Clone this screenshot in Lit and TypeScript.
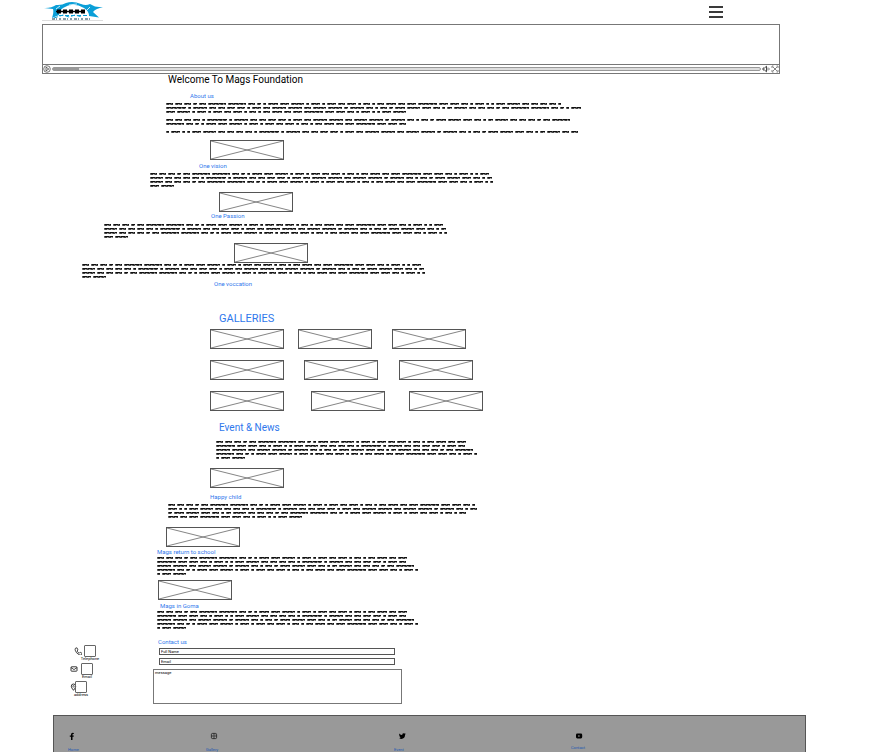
import { LitElement, html, css, svg } from "lit";
import { customElement, property } from "lit/decorators.js";

// Widths of the words in the greeked filler copy; the sequence repeats.
const WORDS = [
  7, 7, 7, 4, 7, 18, 18, 7, 4, 3, 10, 9, 13, 3, 9, 3, 9, 7, 9, 3, 7, 3, 7, 10,
  7, 9, 19, 9, 9, 7, 3, 9, 3, 3, 9, 13, 7, 7, 7, 7, 3, 20, 3, 14, 7, 7, 8, 8,
  3, 9, 7, 14, 14, 7, 13, 14, 4, 14, 7, 3, 7, 4, 10, 13, 9, 7, 3, 5, 13,
];

@customElement("greek-text")
class GreekText extends LitElement {
  @property({ type: Number }) start = 0;
  @property({ type: Number }) count = 105;

  static styles = css`
    :host {
      display: flex;
      flex-wrap: wrap;
      column-gap: 2px;
    }
    .word {
      height: 2px;
      margin: 1px 0;
      background:
        repeating-linear-gradient(90deg, #555 0 1px, #111 1px 5px) 0 0 / 100% 1px no-repeat,
        repeating-linear-gradient(90deg, #777 0 1px, #444 1px 3px, #aaa 3px 4px) 0 1px / 100% 1px no-repeat;
    }
  `;

  render() {
    return Array.from({ length: this.count }, (_, i) => {
      const w = WORDS[(this.start + i) % WORDS.length];
      return html`<span class="word" style="width:${w}px"></span>`;
    });
  }
}

@customElement("image-box")
class ImageBox extends LitElement {
  static styles = css`
    :host {
      display: block;
      width: 74px;
      height: 20px;
    }
    .frame {
      display: block;
      width: 100%;
      height: 100%;
    }
  `;
  render() {
    return html`<svg class="frame" viewBox="0 0 74 20" role="img" aria-label="Image placeholder">
      <path d="M1 1L73 19M1 19L73 1" stroke="#666" stroke-width=".8" fill="none" />
      <rect x=".5" y=".5" width="73" height="19" fill="none" stroke="#555" />
    </svg>`;
  }
}

const icons = {
  phone: svg`<path d="M1.500 1.200L3 .8 4 3 3 4Q3.700 5.600 5.200 6.200L6.200 5.200 8 6.300 7.600 7.800Q6.500 8.400 5 7.700 2 6.200 1.100 3 1 2 1.500 1.200Z" fill="none" stroke="#222" stroke-width=".8"/>`,
  mail: svg`<rect x="1" y="1.800" width="6" height="4.400" rx=".6" fill="none" stroke="#222" stroke-width=".9"/><path d="M1 2.500L4 4.600 7 2.500" fill="none" stroke="#222" stroke-width=".8"/>`,
  pin: svg`<path d="M3.500 7.300Q1.300 4.800 1.300 3.200A2.200 2.200 0 0 1 5.700 3.200Q5.700 4.800 3.500 7.300Z" fill="none" stroke="#222" stroke-width=".9"/><circle cx="3.500" cy="3.300" r=".8" fill="none" stroke="#222" stroke-width=".6"/>`,
  facebook: svg`<path d="M3 8V4.700H1.800V3.400H3V2.400Q3 .8 4.700 .8L5.800 .9V2.100H5.100Q4.500 2.100 4.500 2.700V3.400H5.800L5.600 4.700H4.500V8Z" fill="#000"/>`,
  instagram: svg`<rect x="1.400" y="1.400" width="5.200" height="5.200" rx="1.200" fill="none" stroke="#222" stroke-width=".9"/><circle cx="4" cy="4" r="1.200" fill="none" stroke="#222" stroke-width=".8"/><circle cx="5.600" cy="2.500" r=".3" fill="#222"/>`,
  twitter: svg`<path d="M1.300 1.500Q2.600 3 4.200 3.100 4 1.300 5.600 1.200 6.200 1.200 6.600 1.600L7.600 1.300 7 2.200 7.700 2.100 7.100 2.800Q7 6.700 3.300 7 1.900 7 1 6.300 2.100 6.300 2.800 5.800 1.800 5.600 1.600 4.800L2.100 4.700Q1.200 4.300 1.100 3.300L1.700 3.400Q.8 2.600 1.300 1.500Z" fill="#000"/>`,
  youtube: svg`<rect x="1" y="1.600" width="6.200" height="4.800" rx="1.300" fill="#000"/><path d="M3.400 3V5L5.200 4Z" fill="#999"/>`,
};

const icon = (name: keyof typeof icons) =>
  html`<svg class="icon" viewBox="0 0 8 8" aria-hidden="true">${icons[name]}</svg>`;

@customElement("app-root")
class AppRoot extends LitElement {
  static styles = css`
    :host {
      display: flex;
      flex-direction: column;
      min-height: 100vh;
      background: #fff;
      color: #000;
      font-family: Roboto, "Open Sans", sans-serif;
      font-size: 4px;
      line-height: 4px;
    }
    * {
      box-sizing: border-box;
    }
    h1,
    h2,
    h3 {
      margin: 0;
      font-weight: 400;
    }
    h1,
    h2 {
      font-size: 10px;
      line-height: 12px;
    }
    h2,
    h3,
    a {
      color: #2f78ec;
    }
    h3 {
      font-size: 6px;
      line-height: 8px;
    }
    button {
      display: block;
      padding: 0;
      border: 0;
      background: none;
    }
    svg {
      display: block;
    }
    .icon {
      width: 8px;
      height: 8px;
    }
    .header {
      display: flex;
      justify-content: space-between;
      height: 24px;
      margin: 0 152px 0 42px;
    }
    .logo {
      width: 62px;
      height: 22px;
    }
    .menu {
      display: flex;
      flex-direction: column;
      gap: 3px;
      width: 14px;
      margin-top: 6px;
    }
    .bar {
      height: 2px;
      background: #3a3a3a;
    }
    .player {
      display: flex;
      flex-direction: column;
      height: 50px;
      margin: 0 95px 0 42px;
      border: 1px solid #777;
    }
    .screen {
      flex: 1;
    }
    .controls {
      display: flex;
      align-items: center;
      gap: 1px;
      height: 9px;
      border-top: 1px solid #777;
    }
    .seek {
      flex: 1;
      min-width: 0;
      height: 4px;
      margin: 0;
      appearance: none;
      border: 1px solid #999;
      border-radius: 2px;
      background: linear-gradient(90deg, #999 0 26px, #ddd 26px);
    }
    .seek::-webkit-slider-thumb {
      appearance: none;
      width: 0;
      height: 0;
    }
    .content {
      display: flow-root;
    }
    .title {
      margin-left: 168px;
    }
    .about {
      margin: 6px 0 0 190px;
    }
    .about-copy {
      display: grid;
      gap: 4px;
      width: 416px;
      margin: 2px 0 0 166px;
    }
    .narrow {
      width: 345px;
    }
    .box-vision {
      margin: 6px 0 0 210px;
    }
    .vision {
      margin: 2px 0 0 199px;
    }
    .copy-vision {
      margin: 2px 0 0 150px;
    }
    .box-passion {
      margin: 4px 0 0 219px;
    }
    .passion {
      margin-left: 211px;
    }
    .copy-passion {
      margin: 3px 0 0 104px;
    }
    .box-vocation {
      margin: 4px 0 0 234px;
    }
    .copy-vocation {
      margin-left: 82px;
    }
    .vocation {
      margin: 1px 0 0 214px;
    }
    .galleries {
      margin: 25px 0 0 219px;
      font-size: 11px;
    }
    .gallery {
      display: grid;
      gap: 11px;
      margin: 4px 0 0 210px;
    }
    .gallery-row {
      display: grid;
      grid-template-columns: 88px 94px 74px;
    }
    .gallery-row.wide {
      grid-template-columns: 94px 95px 74px;
    }
    .gallery-row.widest {
      grid-template-columns: 101px 98px 74px;
    }
    .events {
      margin: 11px 0 0 219px;
    }
    .copy-events {
      width: 263px;
      margin: 6px 0 0 216px;
    }
    .box-happy {
      margin: 8px 0 0 210px;
    }
    .happy {
      margin: 5px 0 0 210px;
    }
    .copy-happy {
      width: 309px;
      margin: 2px 0 0 168px;
    }
    .box-school {
      margin: 8px 0 0 166px;
    }
    .school {
      margin: 1px 0 0 157px;
    }
    .copy-news {
      width: 263px;
      margin-left: 157px;
    }
    .box-goma {
      margin: 4px 0 0 158px;
    }
    .goma {
      margin: 2px 0 0 160px;
    }
    .contact {
      display: flex;
      gap: 55px;
      margin: 8px 0 0 70px;
    }
    .ways {
      display: grid;
      grid-auto-rows: 18px;
      align-content: start;
      width: 28px;
      margin-top: 7px;
    }
    .way {
      display: grid;
      grid-template-columns: 11px 12px;
      justify-items: center;
      align-items: center;
      align-content: start;
    }
    .way.phone {
      grid-template-columns: 10px 12px;
      padding-left: 4px;
    }
    .way.address {
      grid-template-columns: 5px 12px;
    }
    .way .icon {
      justify-self: start;
    }
    .tile {
      width: 12px;
      height: 12px;
      border: 1px solid #666;
      border-radius: 1px;
    }
    .way-name {
      grid-column: 2;
      white-space: nowrap;
    }
    .form {
      display: grid;
      justify-items: start;
      width: 249px;
    }
    .form-title {
      margin-left: 5px;
    }
    .field {
      width: 236px;
      height: 7px;
      margin: 2px 0 0 6px;
      padding: 0 1px;
      border: 1px solid #555;
      background: #fff;
      font: inherit;
    }
    .field + .field {
      margin-top: 3px;
    }
    .message {
      width: 100%;
      height: 35px;
      margin-top: 4px;
      padding: 1px;
      border: 1px solid #777;
      font: inherit;
      resize: none;
    }
    .field::placeholder,
    .message::placeholder {
      color: #000;
      opacity: 1;
    }
    .footer {
      flex: 1;
      display: grid;
      grid-template-columns: 138fr 188fr 177fr 234fr;
      height: 36px;
      margin: 11px 69px 0 53px;
      padding: 16px 0 0 14px;
      overflow: hidden;
      background: #999;
      border: solid #555;
      border-width: 1px 1px 0;
    }
    .social {
      display: flex;
      flex-direction: column;
      gap: 8px;
      height: 24px;
    }
    .social.raised {
      gap: 6px;
    }
    .social a {
      color: #1c58b4;
      text-decoration: none;
    }
    .social .icon {
      margin-left: 4px;
    }
    .social:first-child .icon {
      margin-left: 0;
    }
    .scroll {
      height: 1px;
      background: linear-gradient(90deg, #8a8a8a 78%, #ddd 78%);
    }
  `;

  render() {
    return html`
      <header class="header">
        <svg class="logo" viewBox="0 0 62 22" role="img" aria-label="Mags Foundation">
          <path d="M2 8Q9 8.500 14 5Q20 5.500 24 3Q31 .5 39 4Q44 6 48 4L53 6.500L61 7.500Q54 8 51 12L57 17.500L47 16Q47 11 42 8Q31 1.500 21 8Q17 11 17 15L10 18Q12 12 11 9Z" fill="#0a9fd8" />
          <path d="M14 9L18 6M43 12L48 7M27 5L35 4" stroke="#fff" stroke-width=".8" />
          <path d="M15 11.500H43" stroke="#000" stroke-width="4" stroke-dasharray="4 2" />
          <path d="M14 11.500H43" stroke="#000" stroke-width="1.500" />
          <path d="M17 15.500H46M12 18L21 15L27 17L33 15L40 17" stroke="#0a9fd8" stroke-width="1" stroke-dasharray="4 2" fill="none" />
          <path d="M10 19H50" stroke="#0b3b50" stroke-width="1" stroke-dasharray="3 1 1 2 2 2" />
          <path d="M0 20.500H61" stroke="#ddd" />
        </svg>
        <button class="menu" aria-label="Menu">
          <span class="bar"></span><span class="bar"></span><span class="bar"></span>
        </button>
      </header>

      <section class="player" aria-label="Video">
        <div class="screen"></div>
        <div class="controls">
          <button aria-label="Play">
            <svg class="icon" viewBox="0 0 8 8">
              <circle cx="4" cy="4" r="3.300" fill="none" stroke="#555" stroke-width=".8" />
              <path d="M3 2.200V5.800L5.800 4Z" fill="none" stroke="#444" stroke-width=".8" />
            </svg>
          </button>
          <input class="seek" type="range" value="0" aria-label="Seek" />
          <button aria-label="Volume">
            <svg class="icon" viewBox="0 0 8 8">
              <path d="M1 3H2.500L4.500 1.200V6.800L2.500 5H1Z" fill="none" stroke="#333" stroke-width=".9" />
              <path d="M6 2.500V5.500M7.400 3.500V4.500" stroke="#555" stroke-width=".8" />
            </svg>
          </button>
          <button aria-label="Full screen">
            <svg class="icon" viewBox="0 0 8 8">
              <path d="M1 3V1H2.500M5.500 1H7V3M7 5V7H5.500M2.500 7H1V5M2 2L6 6M6 2L2 6" fill="none" stroke="#666" stroke-width=".8" />
            </svg>
          </button>
        </div>
      </section>

      <main class="content">
        <h1 class="title">Welcome To Mags Foundation</h1>
        <h3 class="about">About us</h3>
        <div class="about-copy">
          <greek-text></greek-text>
          <greek-text start="36" count="63"></greek-text>
          <greek-text start="30" count="41"></greek-text>
        </div>
        <image-box class="box-vision"></image-box>
        <h3 class="vision">One vision</h3>
        <greek-text class="narrow copy-vision"></greek-text>
        <image-box class="box-passion"></image-box>
        <h3 class="passion">One Passion</h3>
        <greek-text class="narrow copy-passion"></greek-text>
        <image-box class="box-vocation"></image-box>
        <greek-text class="narrow copy-vocation"></greek-text>
        <h3 class="vocation">One voccation</h3>

        <h2 class="galleries">GALLERIES</h2>
        <div class="gallery">
          ${["", "wide", "widest"].map(
            (size) => html`<div class="gallery-row ${size}">
              <image-box></image-box><image-box></image-box><image-box></image-box>
            </div>`
          )}
        </div>

        <h2 class="events">Event &amp; News</h2>
        <greek-text class="copy-events"></greek-text>
        <image-box class="box-happy"></image-box>
        <h3 class="happy">Happy child</h3>
        <greek-text class="copy-happy"></greek-text>
        <image-box class="box-school"></image-box>
        <h3 class="school">Mags return to school</h3>
        <greek-text class="copy-news"></greek-text>
        <image-box class="box-goma"></image-box>
        <h3 class="goma">Mags in Goma</h3>
        <greek-text class="copy-news"></greek-text>

        <section class="contact">
          <div class="ways">
            <div class="way phone">${icon("phone")}<span class="tile"></span><span class="way-name">Telephone</span></div>
            <div class="way">${icon("mail")}<span class="tile"></span><span class="way-name">Email</span></div>
            <div class="way address">${icon("pin")}<span class="tile"></span><span class="way-name">address</span></div>
          </div>
          <form class="form">
            <h3 class="form-title">Contact us</h3>
            <input class="field" type="text" placeholder="Full Name" aria-label="Full Name" />
            <input class="field" type="email" placeholder="Email" aria-label="Email" />
            <textarea class="message" placeholder="message" aria-label="message"></textarea>
          </form>
        </section>
      </main>

      <footer class="footer">
        <div class="social">${icon("facebook")}<a href="#home">Home</a></div>
        <div class="social">${icon("instagram")}<a href="#gallery">Gallery</a></div>
        <div class="social">${icon("twitter")}<a href="#event">Event</a></div>
        <div class="social raised">${icon("youtube")}<a href="#contact">Contact</a></div>
      </footer>
      <div class="scroll"></div>
    `;
  }
}
